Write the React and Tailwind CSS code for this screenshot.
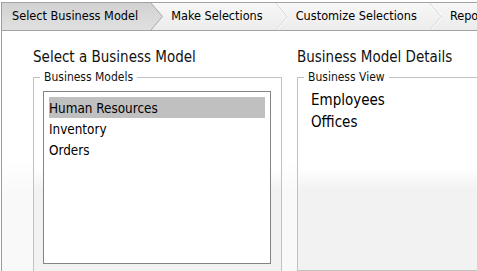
import React from "react";

const font = { fontFamily: '"DejaVu Sans Condensed", "DejaVu Sans", sans-serif' };

const steps = ["Select Business Model", "Make Selections", "Customize Selections", "Reports"];

// chevron between two breadcrumb steps
const Chevron = ({ active }) => (
  <svg width="12" height="27" viewBox="0 0 12 27" className="shrink-0 block">
    {active && (
      <>
        <defs>
          <linearGradient id="act" x1="0" y1="0" x2="0" y2="1">
            <stop offset="0" stopColor="#d2d2d2" />
            <stop offset="1" stopColor="#e0e0e0" />
          </linearGradient>
        </defs>
        <polygon points="0,0 11.5,13.5 0,27" fill="url(#act)" />
      </>
    )}
    <polyline
      points="0,0 11.5,13.5 0,27"
      fill="none"
      stroke={active ? "#a9a9a9" : "#d2d2d2"}
      strokeWidth="1"
    />
    {!active && <polyline points="1,0 12.5,13.5 1,27" fill="none" stroke="#ffffff" strokeWidth="1" />}
  </svg>
);

const Breadcrumb = () => (
  <div className="flex shrink-0 h-[29px] border-t border-b border-[#a3a3a3] bg-[linear-gradient(to_bottom,#f7f7f7,#ececec)] text-[12.6px] text-black overflow-hidden whitespace-nowrap">
    {steps.map((s, i) => (
      <div key={s} className="flex items-center shrink-0">
        <div
          className={
            i === 0
              ? "h-full flex items-center pl-[10px] pr-[13px] bg-[linear-gradient(to_bottom,#d2d2d2,#e0e0e0)]"
              : "h-full flex items-center pl-[8px] pr-[13px]"
          }
        >
          {s}
        </div>
        {i < steps.length - 1 && <Chevron active={i === 0} />}
      </div>
    ))}
  </div>
);

const Panel = ({ title, legend, width, children }) => (
  <div className="flex flex-col shrink-0" style={{ width }}>
    <div className="text-[15px] leading-[18px] text-[#111] whitespace-nowrap">{title}</div>
    <fieldset className="mt-[4px] h-[220px] border border-[#c2c2c2] p-0 m-0 bg-[linear-gradient(to_bottom,#ffffff_90px,#f2f2f2_112px)]">
      <legend className="ml-[6px] px-[4px] text-[12px] leading-[14px] text-[#111]">{legend}</legend>
      {children}
    </fieldset>
  </div>
);

export default function App() {
  const models = ["Human Resources", "Inventory", "Orders"];
  const views = ["Employees", "Offices"];
  return (
    <div className="w-[477px] h-[271px] overflow-hidden bg-white pt-[2px] pl-[1px]" style={font}>
      <div className="h-[269px] border-l border-[#9c9c9c] flex flex-col">
        <Breadcrumb />
        <div className="flex flex-1 min-h-0 overflow-hidden pl-[30px] pt-[17px] gap-[15px] bg-[linear-gradient(to_bottom,#ffffff_130px,#f9f9f9_160px)]">
          <div className="pl-[1px]">
            <Panel title="Select a Business Model" legend="Business Models" width={249}>
              <div className="ml-[9px] mt-[7px] w-[228px] h-[173px] border border-[#848484] bg-white pt-[5px] pl-[5px] pr-[5px]">
                {models.map((m, i) => (
                  <div
                    key={m}
                    className={
                      "h-[21px] leading-[21px] pt-[1px] text-[13.4px] text-black whitespace-nowrap " +
                      (i === 0 ? "bg-[#c0c0c0]" : "")
                    }
                  >
                    {m}
                  </div>
                ))}
              </div>
            </Panel>
          </div>
          <Panel title="Business Model Details" legend="Business View" width={200}>
            <div className="pl-[13px] pt-[5px]">
              {views.map((v) => (
                <div key={v} className="h-[22px] leading-[22px] text-[15px] text-black whitespace-nowrap">
                  {v}
                </div>
              ))}
            </div>
          </Panel>
        </div>
      </div>
    </div>
  );
}
